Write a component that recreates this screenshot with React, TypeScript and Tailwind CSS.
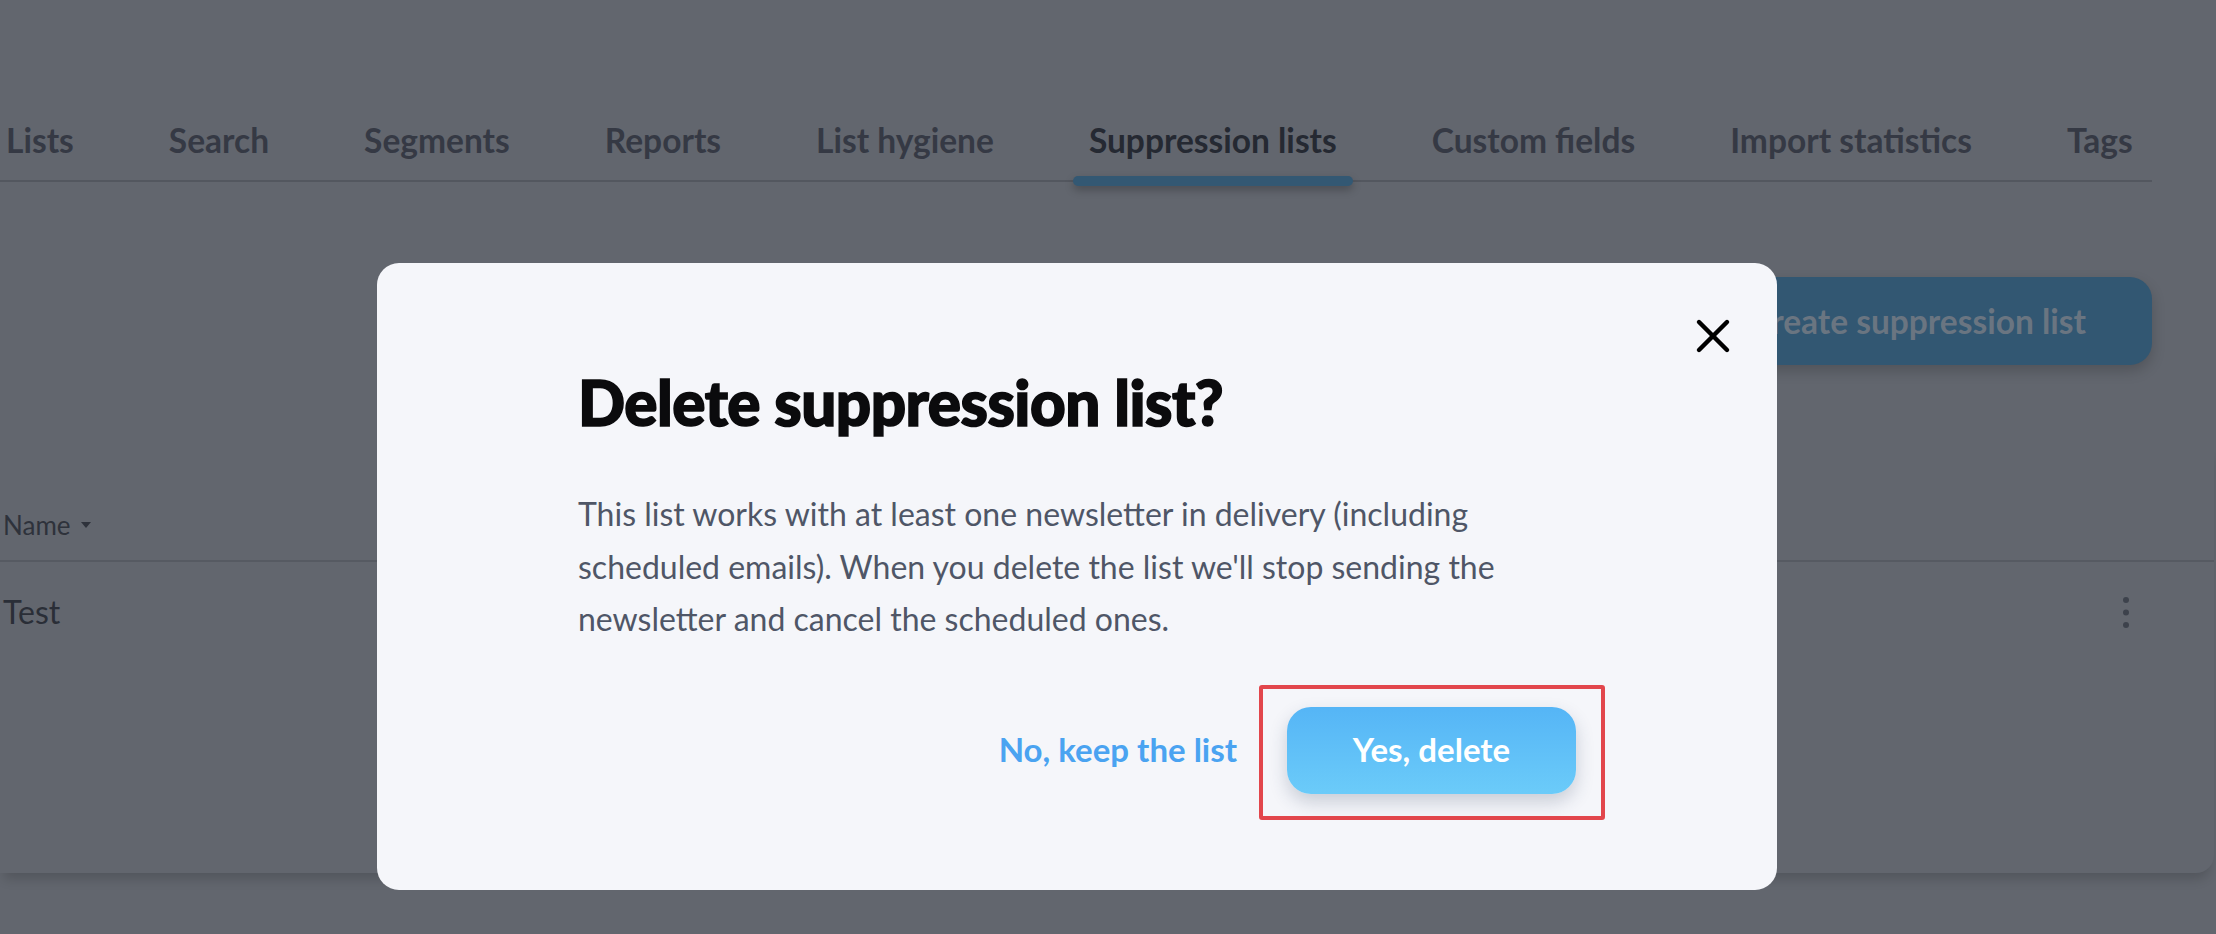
import { X } from 'lucide-react';

const tabs = [
  'Lists',
  'Search',
  'Segments',
  'Reports',
  'List hygiene',
  'Suppression lists',
  'Custom fields',
  'Import statistics',
  'Tags',
];

function KebabIcon() {
  return (
    <svg width="8" height="33" viewBox="0 0 8 33" fill="#3d424c">
      <circle cx="4" cy="4" r="3" />
      <circle cx="4" cy="16.5" r="3" />
      <circle cx="4" cy="29" r="3" />
    </svg>
  );
}

function DeleteModal() {
  return (
    <div className="absolute left-[377px] top-[263px] w-[1400px] h-[627px] rounded-[22px] bg-[#f5f6fa] px-[201px] pt-[102px]">
      <button className="absolute right-[50px] top-[59px] w-[28px] h-[28px] flex items-center justify-center text-black">
        <X className="w-[56px] h-[56px] shrink-0" strokeWidth={1.9} />
      </button>

      <h2 className="font-['Lato_Black',Lato,sans-serif] text-[62px] leading-[74px] font-black text-[#0b0b0d] tracking-[-0.5px] [-webkit-text-stroke:1.6px_#0b0b0d]">
        Delete suppression list?
      </h2>

      <p className="mt-[49px] text-[32px] leading-[52.5px] text-[#4f5667] whitespace-nowrap">
        This list works with at least one newsletter in delivery (including
        <br />
        scheduled emails). When you delete the list we'll stop sending the
        <br />
        newsletter and cancel the scheduled ones.
      </p>

      <div className="mt-[61px] flex items-center justify-end gap-[50px]">
        <button className="text-[33px] font-bold text-[#4aa3f1]">No, keep the list</button>
        <div className="relative">
          <button className="w-[289px] h-[87px] rounded-[24px] bg-gradient-to-b from-[#55b5f6] to-[#6bcbf9] text-white text-[33px] font-bold shadow-[0_8px_18px_rgba(40,60,90,0.22)]">
            Yes, delete
          </button>
          {/* highlight box around the confirm button */}
          <div className="absolute -left-[28px] -right-[29px] -top-[22px] -bottom-[26px] border-4 border-[#e2464c] rounded-[3px] pointer-events-none" />
        </div>
      </div>
    </div>
  );
}

export default function App() {
  return (
    <div className="relative w-[2216px] h-[934px] overflow-hidden bg-[#62666e] font-[Lato,sans-serif]">
      {/* tabs */}
      <div className="w-[2152px] border-b-2 border-[#53575f] pt-[119px]">
        <div className="flex gap-[63px] -ml-[10px]">
          {tabs.map((t) => {
            const active = t === 'Suppression lists';
            return (
              <div
                key={t}
                className={`relative shrink-0 whitespace-nowrap px-[16px] pb-[19px] text-[33.5px] leading-[42px] font-bold ${active ? 'text-[#252932]' : 'text-[#353944]'}`}
              >
                {t}
                {active && (
                  <div className="absolute left-0 right-0 -bottom-[6px] h-[10px] rounded-full bg-[#335873] shadow-[0_4px_8px_rgba(0,0,0,0.25)]" />
                )}
              </div>
            );
          })}
        </div>
      </div>

      {/* create button */}
      <div className="w-[2152px] flex justify-end mt-[95px]">
        <button className="h-[88px] px-[66px] rounded-[22px] bg-[#325772] text-[#6a7581] text-[33.5px] font-bold shadow-[0_6px_14px_rgba(0,0,0,0.18)]">
          Create suppression list
        </button>
      </div>

      {/* table card */}
      <div className="mt-[80px] w-[2214px] h-[428px] rounded-br-[18px] shadow-[0_10px_12px_-4px_rgba(0,0,0,0.16)] bg-[#62666e]">
        <div className="h-[45px]" />
        <div className="flex items-center gap-[10px] h-[72px] pl-[3px] text-[26px] text-[#2e323b] border-b-2 border-[#565a62]">
          <span>Name</span>
          <svg width="10" height="6" viewBox="0 0 10 6" fill="#2e323b">
            <path d="M0 0h10L5 6z" />
          </svg>
        </div>
        <div className="flex items-center justify-between h-[100px] pl-[3px] pr-[84px] text-[32px] text-[#2a2e37]">
          <span>Test</span>
          <KebabIcon />
        </div>
      </div>

      <DeleteModal />
    </div>
  );
}
